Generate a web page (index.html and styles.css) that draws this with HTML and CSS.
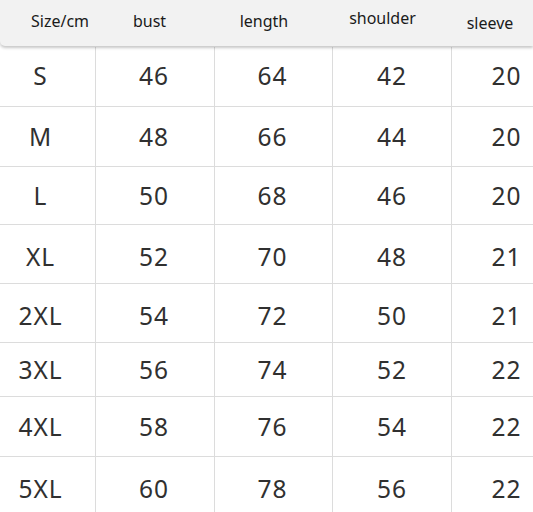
FILE: index.html
```html
<!DOCTYPE html>
<html>
<head>
<meta charset="utf-8">
<link rel="stylesheet" href="styles.css">
</head>
<body>
<div class="chart">
  <div class="head">
    <div class="h c1">Size/cm</div>
    <div class="h c2">bust</div>
    <div class="h c3">length</div>
    <div class="h c4 up">shoulder</div>
    <div class="h c5">sleeve</div>
  </div>
  <div class="body">
    <div class="row r1"><div class="d c1">S</div><div class="d c2">46</div><div class="d c3">64</div><div class="d c4">42</div><div class="d c5">20</div></div>
    <div class="row r2"><div class="d c1">M</div><div class="d c2">48</div><div class="d c3">66</div><div class="d c4">44</div><div class="d c5">20</div></div>
    <div class="row r3"><div class="d c1">L</div><div class="d c2">50</div><div class="d c3">68</div><div class="d c4">46</div><div class="d c5">20</div></div>
    <div class="row r4"><div class="d c1">XL</div><div class="d c2">52</div><div class="d c3">70</div><div class="d c4">48</div><div class="d c5">21</div></div>
    <div class="row r5"><div class="d c1">2XL</div><div class="d c2">54</div><div class="d c3">72</div><div class="d c4">50</div><div class="d c5">21</div></div>
    <div class="row r6"><div class="d c1">3XL</div><div class="d c2">56</div><div class="d c3">74</div><div class="d c4">52</div><div class="d c5">22</div></div>
    <div class="row r7"><div class="d c1">4XL</div><div class="d c2">58</div><div class="d c3">76</div><div class="d c4">54</div><div class="d c5">22</div></div>
    <div class="row r8"><div class="d c1">5XL</div><div class="d c2">60</div><div class="d c3">78</div><div class="d c4">56</div><div class="d c5">22</div></div>
  </div>
</div>
</body>
</html>
```
FILE: styles.css
```css
* { box-sizing: border-box; }
html, body { margin: 0; padding: 0; background: #fff; }
body { width: 533px; height: 512px; overflow: hidden; font-family: "Noto Sans", "Open Sans", sans-serif; }
.chart { width: 533px; }
.head {
  display: grid;
  grid-template-columns: 96px 119px 118px 119px 81px;
  height: 46px;
  background: #f2f2f2;
  border-radius: 0 0 0 5px;
  box-shadow: 0 2px 3px rgba(0,0,0,0.22);
  position: relative;
  z-index: 1;
}
.h {
  display: flex;
  align-items: center;
  justify-content: center;
  font-size: 16px;
  color: #1a1a1a;
  padding-bottom: 5px;
}
.h.c1 { padding-left: 24px; }
.h.c2 { padding-right: 12px; }
.h.c3 { padding-right: 20px; }
.h.c4 { padding-right: 20px; }
.h.c5 { padding-right: 5px; padding-bottom: 0; }
.h.up { padding-bottom: 10px; }
.body { margin-top: 1px; }
.row {
  display: grid;
  grid-template-columns: 96px 119px 118px 119px 81px;
  border-bottom: 1px solid #dcdcdc;
}
.r1 { height: 60px; }
.r2 { height: 60px; }
.r3 { height: 58px; }
.r4 { height: 59px; }
.r5 { height: 59px; }
.r6 { height: 54px; }
.r7 { height: 60px; }
.r8 { height: 62px; border-bottom: none; }
.d {
  display: flex;
  align-items: center;
  justify-content: center;
  font-size: 24.5px;
  color: #303030;
  letter-spacing: 1px;
  border-right: 1px solid #dcdcdc;
}
.d.c1 { padding-right: 14px; }
.d.c2 { padding-right: 2px; }
.d.c3 { padding-right: 2px; }
.d.c4 { padding-right: 0; }
.d.c5 { padding-left: 28px; border-right: none; }
.r1 .d { padding-bottom: 3px; }
.r4 .d, .r5 .d { padding-top: 4px; }
```
